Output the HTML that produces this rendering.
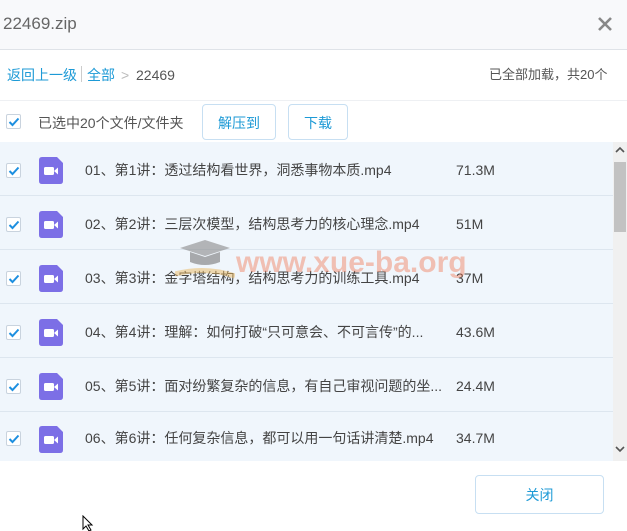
<!DOCTYPE html>
<html><head><meta charset="utf-8"><style>
*{margin:0;padding:0;box-sizing:border-box}
body{width:627px;height:531px;overflow:hidden;background:#fff;font-family:"Liberation Sans","Noto Sans CJK SC",sans-serif;color:#444;position:relative}
.title{position:absolute;left:0;top:0;width:627px;height:50px;background:#f8f9fb;border-bottom:1px solid #dfe3e8}
.title span{position:absolute;left:3px;top:14px;font-size:17px;color:#666}
.close{position:absolute;left:597px;top:16px}
.bc{position:absolute;top:66px;font-size:14px;line-height:18px}
.bar{position:absolute;left:0;top:100px;width:627px;border-top:1px solid #eef0f3}
.cb{position:absolute;width:15px;height:15px;border:1px solid #c9d3de;border-radius:2px;background:#fff}
.cb svg{position:absolute;left:1px;top:1px}
.btn{position:absolute;border:1px solid #c7dff2;border-radius:4px;color:#1d9ad6;font-size:14px;text-align:center;background:#fff}
.row{position:absolute;left:0;width:613px;height:54px;background:#f0f6fc;border-bottom:1px solid #dde6ef}
.row .name,.row .size{position:absolute;top:18px;font-size:14px;line-height:20px;color:#444;white-space:nowrap}
.row .name{left:85px}
.row .size{left:456px}
.icon{position:absolute;left:39px;top:15px;width:24px;height:27px}
</style></head><body>
<div class="title"><span>22469.zip</span>
<svg class="close" width="16" height="16" viewBox="0 0 16 16"><path d="M2 2L14 14M14 2L2 14" stroke="#888" stroke-width="2.6"/></svg></div>
<div class="bc" style="left:7px;color:#1d9ad6">返回上一级</div>
<div style="position:absolute;left:81px;top:66px;width:1px;height:16px;background:#ccc"></div>
<div class="bc" style="left:87px;color:#1d9ad6">全部</div>
<div class="bc" style="left:121px;color:#bbb">&gt;</div>
<div class="bc" style="left:136px;color:#555">22469</div>
<div class="bc" style="left:489px;color:#555;font-size:13px">已全部加载，共20个</div>
<div class="bar"></div>
<div class="cb" style="left:6px;top:114px"><svg width="12" height="12" viewBox="0 0 12 12"><path d="M1.5 6L4.5 9L10.5 2.5" stroke="#1d8fe0" stroke-width="2" fill="none"/></svg></div>
<div style="position:absolute;left:38px;top:113px;font-size:14px;color:#555">已选中20个文件/文件夹</div>
<div class="btn" style="left:202px;top:104px;width:74px;height:36px;line-height:36px">解压到</div>
<div class="btn" style="left:288px;top:104px;width:60px;height:36px;line-height:36px">下载</div>

<div class="row" style="top:142px"><div class="cb" style="left:6px;top:21px"><svg width="12" height="12" viewBox="0 0 12 12"><path d="M1.5 6L4.5 9L10.5 2.5" stroke="#1d8fe0" stroke-width="2" fill="none"/></svg></div><svg class="icon" viewBox="0 0 24 27"><path d="M3 0H18L24 6V24Q24 27 21 27H3Q0 27 0 24V3Q0 0 3 0Z" fill="#7c6fe6"/><rect x="5" y="10" width="10" height="8" rx="1.5" fill="#fff"/><path d="M15 14L19 10.5V17.5Z" fill="#fff"/></svg><div class="name">01、第1讲：透过结构看世界，洞悉事物本质.mp4</div><div class="size">71.3M</div></div>
<div class="row" style="top:196px"><div class="cb" style="left:6px;top:21px"><svg width="12" height="12" viewBox="0 0 12 12"><path d="M1.5 6L4.5 9L10.5 2.5" stroke="#1d8fe0" stroke-width="2" fill="none"/></svg></div><svg class="icon" viewBox="0 0 24 27"><path d="M3 0H18L24 6V24Q24 27 21 27H3Q0 27 0 24V3Q0 0 3 0Z" fill="#7c6fe6"/><rect x="5" y="10" width="10" height="8" rx="1.5" fill="#fff"/><path d="M15 14L19 10.5V17.5Z" fill="#fff"/></svg><div class="name">02、第2讲：三层次模型，结构思考力的核心理念.mp4</div><div class="size">51M</div></div>
<div class="row" style="top:250px"><div class="cb" style="left:6px;top:21px"><svg width="12" height="12" viewBox="0 0 12 12"><path d="M1.5 6L4.5 9L10.5 2.5" stroke="#1d8fe0" stroke-width="2" fill="none"/></svg></div><svg class="icon" viewBox="0 0 24 27"><path d="M3 0H18L24 6V24Q24 27 21 27H3Q0 27 0 24V3Q0 0 3 0Z" fill="#7c6fe6"/><rect x="5" y="10" width="10" height="8" rx="1.5" fill="#fff"/><path d="M15 14L19 10.5V17.5Z" fill="#fff"/></svg><div class="name">03、第3讲：金字塔结构，结构思考力的训练工具.mp4</div><div class="size">37M</div></div>
<div class="row" style="top:304px"><div class="cb" style="left:6px;top:21px"><svg width="12" height="12" viewBox="0 0 12 12"><path d="M1.5 6L4.5 9L10.5 2.5" stroke="#1d8fe0" stroke-width="2" fill="none"/></svg></div><svg class="icon" viewBox="0 0 24 27"><path d="M3 0H18L24 6V24Q24 27 21 27H3Q0 27 0 24V3Q0 0 3 0Z" fill="#7c6fe6"/><rect x="5" y="10" width="10" height="8" rx="1.5" fill="#fff"/><path d="M15 14L19 10.5V17.5Z" fill="#fff"/></svg><div class="name">04、第4讲：理解：如何打破“只可意会、不可言传”的...</div><div class="size">43.6M</div></div>
<div class="row" style="top:358px"><div class="cb" style="left:6px;top:21px"><svg width="12" height="12" viewBox="0 0 12 12"><path d="M1.5 6L4.5 9L10.5 2.5" stroke="#1d8fe0" stroke-width="2" fill="none"/></svg></div><svg class="icon" viewBox="0 0 24 27"><path d="M3 0H18L24 6V24Q24 27 21 27H3Q0 27 0 24V3Q0 0 3 0Z" fill="#7c6fe6"/><rect x="5" y="10" width="10" height="8" rx="1.5" fill="#fff"/><path d="M15 14L19 10.5V17.5Z" fill="#fff"/></svg><div class="name">05、第5讲：面对纷繁复杂的信息，有自己审视问题的坐...</div><div class="size">24.4M</div></div>
<div class="row" style="top:412px;height:49px;border-bottom:none"><div class="cb" style="left:6px;top:19px"><svg width="12" height="12" viewBox="0 0 12 12"><path d="M1.5 6L4.5 9L10.5 2.5" stroke="#1d8fe0" stroke-width="2" fill="none"/></svg></div><svg class="icon" style="top:14px" viewBox="0 0 24 27"><path d="M3 0H18L24 6V24Q24 27 21 27H3Q0 27 0 24V3Q0 0 3 0Z" fill="#7c6fe6"/><rect x="5" y="10" width="10" height="8" rx="1.5" fill="#fff"/><path d="M15 14L19 10.5V17.5Z" fill="#fff"/></svg><div class="name" style="top:16px">06、第6讲：任何复杂信息，都可以用一句话讲清楚.mp4</div><div class="size" style="top:16px">34.7M</div></div>

<div style="position:absolute;left:613px;top:142px;width:14px;height:319px;background:#f0f0f0"></div>
<div style="position:absolute;left:614px;top:162px;width:12px;height:70px;background:#c2c2c2"></div>
<svg style="position:absolute;left:615px;top:146px" width="10" height="8"><path d="M1 6L5 2L9 6" stroke="#555" stroke-width="1.6" fill="none"/></svg>
<svg style="position:absolute;left:615px;top:445px" width="10" height="8"><path d="M1 2L5 6L9 2" stroke="#555" stroke-width="1.6" fill="none"/></svg>

<div style="position:absolute;left:236px;top:246px;font-size:30px;font-weight:bold;color:rgba(240,110,70,0.4);font-family:'Liberation Sans',sans-serif">www.xue-ba.org</div>
<svg style="position:absolute;left:175px;top:236px" width="60" height="45"><path d="M5 12L30 4L55 12L30 20Z" fill="#888" opacity=".6"/><path d="M15 16V26Q30 32 45 26V16L30 21Z" fill="#777" opacity=".6"/><path d="M0 38Q30 30 60 40" stroke="#e9b860" stroke-width="5" fill="none" opacity=".5"/></svg>

<div class="btn" style="left:475px;top:475px;width:129px;height:39px;line-height:39px;font-size:14px">关闭</div>
<svg style="position:absolute;left:82px;top:515px" width="12" height="16"><path d="M1 1V14L4 11L7 16L9 15L6 10H10Z" fill="#fff" stroke="#000"/></svg>
</body></html>
